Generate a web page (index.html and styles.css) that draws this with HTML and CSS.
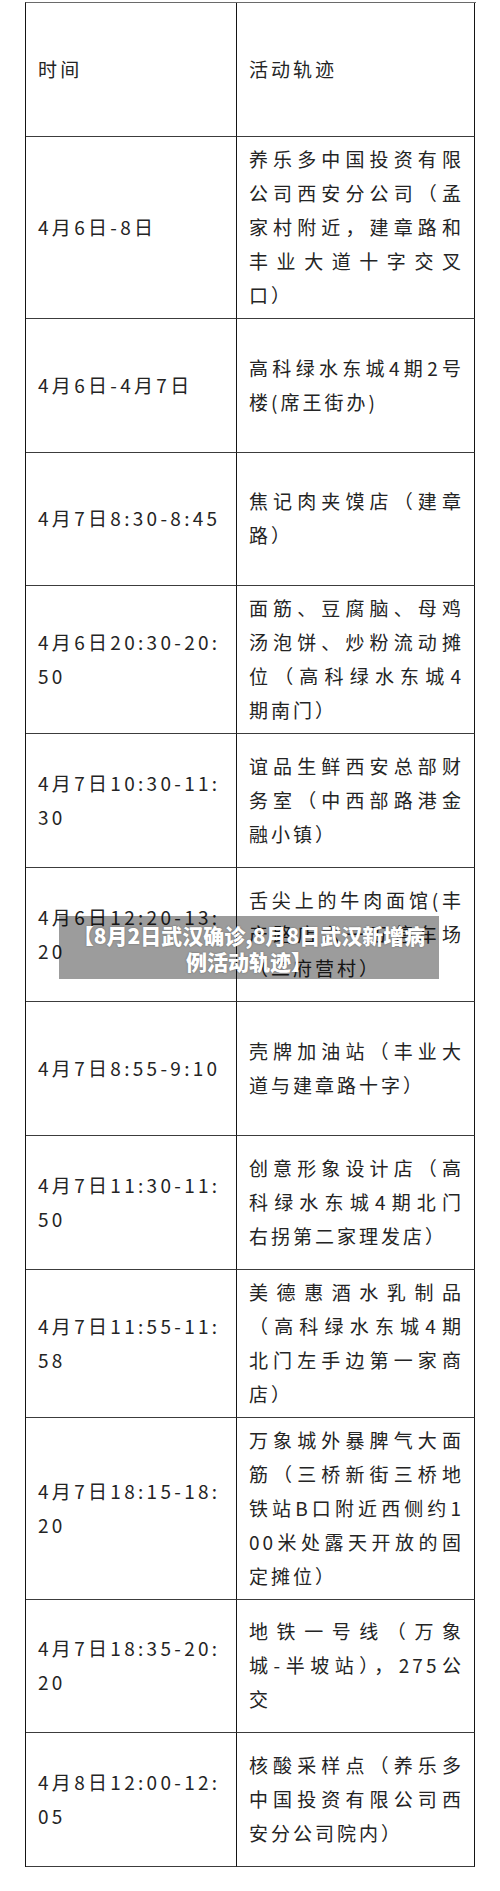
FILE: index.html
```html
<!DOCTYPE html>
<html lang="zh-CN">
<head>
<meta charset="utf-8">
<title>活动轨迹</title>
<link rel="stylesheet" href="styles.css">
</head>
<body>
<div class="page">
  <div class="sheet">
    <div class="cell time">时间</div>
    <div class="cell act">活动轨迹</div>

    <div class="cell time">4月6日-8日</div>
    <div class="cell act"><span>养乐多中国投资有限</span><span>公司西安分公司（孟</span><span>家村附近，建章路和</span><span>丰业大道十字交叉</span><span>口）</span></div>

    <div class="cell time">4月6日-4月7日</div>
    <div class="cell act"><span>高科绿水东城4期2号</span><span>楼(席王街办)</span></div>

    <div class="cell time">4月7日8:30-8:45</div>
    <div class="cell act"><span>焦记肉夹馍店（建章</span><span>路）</span></div>

    <div class="cell time">4月6日20:30-20:<br>50</div>
    <div class="cell act"><span>面筋、豆腐脑、母鸡</span><span>汤泡饼、炒粉流动摊</span><span>位（高科绿水东城4</span><span>期南门）</span></div>

    <div class="cell time">4月7日10:30-11:<br>30</div>
    <div class="cell act"><span>谊品生鲜西安总部财</span><span>务室（中西部路港金</span><span>融小镇）</span></div>

    <div class="cell time">4月6日12:20-13:<br>20</div>
    <div class="cell act"><span>舌尖上的牛肉面馆(丰</span><span>产路店六一五停车场</span><span>（二府营村）</span></div>

    <div class="cell time">4月7日8:55-9:10</div>
    <div class="cell act"><span>壳牌加油站（丰业大</span><span>道与建章路十字）</span></div>

    <div class="cell time">4月7日11:30-11:<br>50</div>
    <div class="cell act"><span>创意形象设计店（高</span><span>科绿水东城4期北门</span><span>右拐第二家理发店）</span></div>

    <div class="cell time">4月7日11:55-11:<br>58</div>
    <div class="cell act"><span>美德惠酒水乳制品</span><span>（高科绿水东城4期</span><span>北门左手边第一家商</span><span>店）</span></div>

    <div class="cell time">4月7日18:15-18:<br>20</div>
    <div class="cell act"><span>万象城外暴脾气大面</span><span>筋（三桥新街三桥地</span><span>铁站B口附近西侧约1</span><span>00米处露天开放的固</span><span>定摊位）</span></div>

    <div class="cell time">4月7日18:35-20:<br>20</div>
    <div class="cell act"><span>地铁一号线（万象</span><span>城-半坡站），275公</span><span>交</span></div>

    <div class="cell time">4月8日12:00-12:<br>05</div>
    <div class="cell act"><span>核酸采样点（养乐多</span><span>中国投资有限公司西</span><span>安分公司院内）</span></div>
  </div>

  <div class="caption">【8月2日武汉确诊,8月8日武汉新增病例活动轨迹】</div>
</div>
</body>
</html>
```

FILE: styles.css
```css
html, body {
  margin: 0;
  padding: 0;
  background: #ffffff;
}

body {
  font-family: "Noto Sans CJK SC", "Noto Sans", sans-serif;
  color: #242424;
}

.page {
  position: relative;
  width: 500px;
  padding-bottom: 23px;
}

.sheet {
  display: grid;
  grid-template-columns: 211px 238px;
  width: 450px;
  margin: 2px 0 0 25px;
  border-left: 1px solid #151515;
  border-top: 1px solid #6a6a6a;
}

.cell {
  box-sizing: border-box;
  min-height: 133.8px;
  display: flex;
  flex-direction: column;
  justify-content: center;
  border-right: 1px solid #151515;
  border-bottom: 1px solid #3c3c3c;
  font-size: 19px;
  line-height: 34px;
  letter-spacing: 3px;
}

.time {
  padding: 5px 4px 6px 12px;
  letter-spacing: 3.3px;
}

.act {
  padding: 5px 10px 6px 12px;
}

.act span {
  display: block;
  text-align: justify;
  text-align-last: justify;
}

.act span:last-child {
  text-align-last: auto;
}

.caption {
  position: absolute;
  left: 59px;
  top: 914px;
  width: 380px;
  box-sizing: border-box;
  padding: 5.5px 12px;
  background: rgba(0, 0, 0, 0.39);
  color: #ffffff;
  font-size: 21px;
  font-weight: 900;
  line-height: 26px;
  text-align: center;
  text-shadow: 0 0 2px rgba(0, 0, 0, 0.35);
}
```
